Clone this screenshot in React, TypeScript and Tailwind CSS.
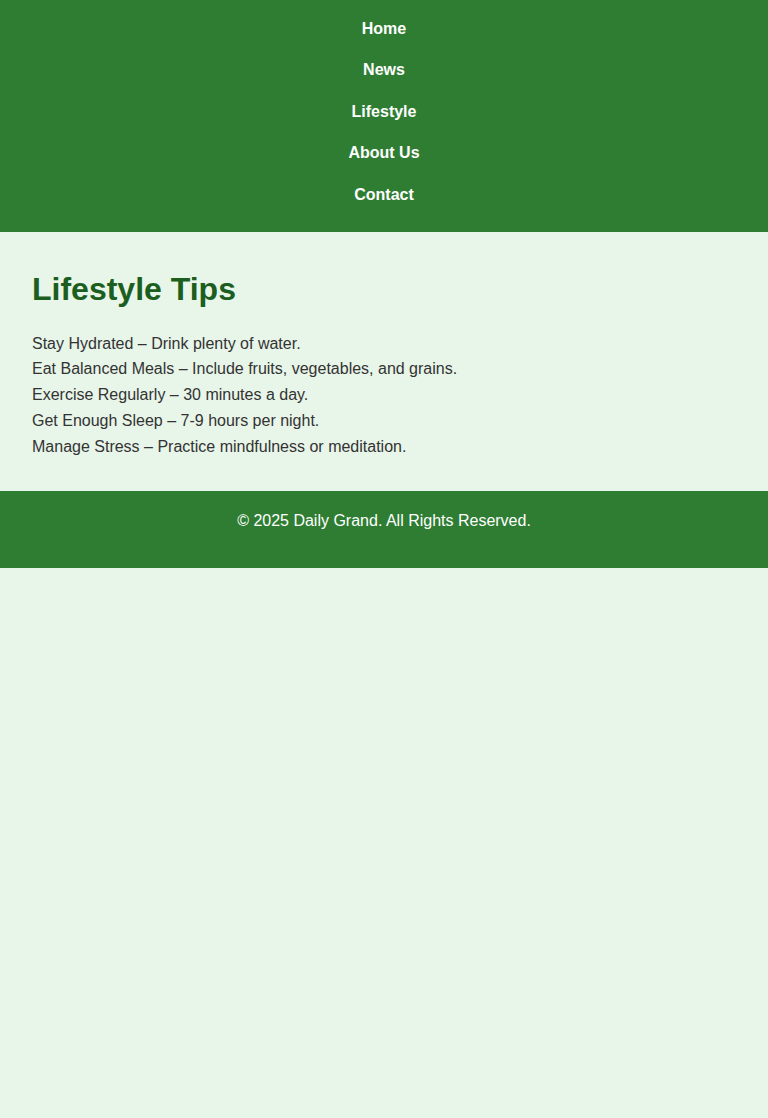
const navLinks = ["Home", "News", "Lifestyle", "About Us", "Contact"];

const tips = [
  "Stay Hydrated – Drink plenty of water.",
  "Eat Balanced Meals – Include fruits, vegetables, and grains.",
  "Exercise Regularly – 30 minutes a day.",
  "Get Enough Sleep – 7-9 hours per night.",
  "Manage Stress – Practice mindfulness or meditation.",
];

export default function App() {
  return (
    <div className="min-h-screen bg-[#e8f5e9] font-['Liberation_Sans',Arial,sans-serif] text-[#333] leading-[1.6]">
      <nav className="bg-[#2e7d32] pt-[8px] pb-[16px]">
        <ul className="flex flex-col items-center">
          {navLinks.map((link) => (
            <li key={link} className="h-[41.5px] flex items-center">
              <a href="#" className="text-white font-bold text-[16px] leading-[18px]">
                {link}
              </a>
            </li>
          ))}
        </ul>
      </nav>

      <main className="p-8">
        <h1 className="text-[32px] font-bold text-[#1b5e20] mb-4">
          Lifestyle Tips
        </h1>
        <ul>
          {tips.map((tip) => (
            <li key={tip} className="text-[16px] leading-[25.75px]">
              {tip}
            </li>
          ))}
        </ul>
      </main>

      <footer className="bg-[#2e7d32] text-white text-center pt-[17px] pb-[34px]">
        <p className="text-[16px]">© 2025 Daily Grand. All Rights Reserved.</p>
      </footer>
    </div>
  );
}
